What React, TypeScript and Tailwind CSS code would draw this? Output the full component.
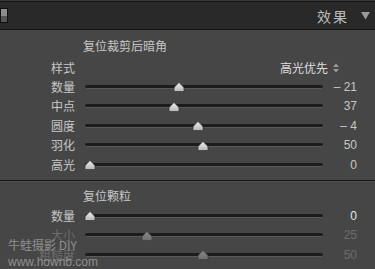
import React from "react";

const CJK = { fontFamily: '"Noto Sans CJK SC", "Noto Sans", sans-serif' };
const NUM = { fontFamily: '"Liberation Sans", Arial, sans-serif' };

function Thumb({ faded }: { faded?: boolean }) {
  return (
    <svg width="12" height="10" viewBox="0 0 12 10" className="block">
      <defs>
        <linearGradient id={faded ? "tgf" : "tg"} x1="0" y1="0" x2="0" y2="1">
          <stop offset="0" stopColor={faded ? "#8a8a8a" : "#f2f2f2"} />
          <stop offset="1" stopColor={faded ? "#6e6e6e" : "#b5b5b5"} />
        </linearGradient>
      </defs>
      <path
        d="M6 0.5 L10.5 5 Q11 6 11 7 L11 8.5 Q11 9.5 10 9.5 L2 9.5 Q1 9.5 1 8.5 L1 7 Q1 6 1.5 5 Z"
        fill={`url(#${faded ? "tgf" : "tg"})`}
        stroke={faded ? "#3a3a3a" : "#2a2a2a"}
        strokeWidth="0.6"
      />
    </svg>
  );
}

function Row({
  label,
  value,
  thumb,
  faded,
  valueBright,
}: {
  label: string;
  value: string;
  thumb: number;
  faded?: boolean;
  valueBright?: boolean;
}) {
  const text = faded ? "text-[#6c6c6c]" : "text-[#c6c6c6]";
  return (
    <div className="flex items-center h-[19.4px]">
      <div className={`w-[75px] text-right text-[12px] leading-none ${text}`} style={CJK}>
        {label}
      </div>
      <div className="ml-[10px] w-[238px] relative h-full flex items-center">
        <div className="w-full h-[4px] rounded-full bg-[#1c1c1c] border-b border-[#5a5a5a]" />
        <div className="absolute top-[5px]" style={{ left: thumb - 85 - 6 }}>
          <Thumb faded={faded} />
        </div>
      </div>
      <div
        className={`w-[34px] text-right text-[12px] leading-none ${
          faded ? "text-[#6c6c6c]" : valueBright ? "text-[#e6e6e6]" : "text-[#c6c6c6]"
        }`}
        style={NUM}
      >
        {value}
      </div>
    </div>
  );
}

export default function App() {
  return (
    <div className="w-[375px] h-[269px] overflow-hidden bg-[#464646] relative">
      <div className="h-[1px] bg-[#3a3a3a]" />
      <div className="h-[1px] bg-[#141414]" />
      <div className="h-[28px] bg-[#292929] border-b border-[#141414] flex items-center">
        <div className="w-[8px] h-[15px] border border-[#111] flex flex-col">
          <div className="flex-1 bg-[#8c8c8c]" />
          <div className="flex-1 bg-[#555]" />
        </div>
        <div className="flex-1" />
        <div className="text-[14px] leading-none text-[#bdbdbd] tracking-[2px]" style={CJK}>
          效果
        </div>
        <svg width="9" height="9" viewBox="0 0 9 9" className="ml-[12px] mr-[5px]">
          <path d="M0 1 L9 1 L4.5 8.5 Z" fill="#9a9a9a" />
        </svg>
      </div>

      <div className="pt-[8px]">
        <div className="ml-[83px] text-[12px] leading-[16px] text-[#c6c6c6]" style={CJK}>
          复位裁剪后暗角
        </div>
        <div className="mt-[4px] flex items-center h-[19.4px]">
          <div className="w-[75px] text-right text-[12px] leading-none text-[#c6c6c6]" style={CJK}>
            样式
          </div>
          <div className="flex-1" />
          <div className="text-[12px] leading-none text-[#dedede]" style={CJK}>
            高光优先
          </div>
          <svg width="6" height="10" viewBox="0 0 6 10" className="ml-[5px] mr-[36px]">
            <path d="M0 4 L3 0.5 L6 4 Z" fill="#9a9a9a" />
            <path d="M0 6 L3 9.5 L6 6 Z" fill="#9a9a9a" />
          </svg>
        </div>
        <Row label="数量" value="– 21" thumb={179} />
        <Row label="中点" value="37" thumb={174} />
        <Row label="圆度" value="– 4" thumb={198} />
        <Row label="羽化" value="50" thumb={203} />
        <Row label="高光" value="0" thumb={90} />

        <div className="mt-[6px] h-[1px] bg-[#161616]" />
        <div className="h-[1px] bg-[#4e4e4e]" />

        <div className="mt-[6px] ml-[83px] text-[12px] leading-[16px] text-[#c6c6c6]" style={CJK}>
          复位颗粒
        </div>
        <div className="mt-[2px]">
          <Row label="数量" value="0" thumb={90} valueBright />
          <Row label="大小" value="25" thumb={147} faded />
          <Row label="粗糙度" value="50" thumb={203} faded />
        </div>
      </div>

      <div className="absolute left-[8px] top-[238px] text-[12px] leading-[14px] text-white/40" style={CJK}>
        牛蛙摄影 DIY
      </div>
      <div className="absolute left-[8px] top-[255px] text-[12px] leading-[14px] text-white/40" style={NUM}>
        www.hownb.com
      </div>
    </div>
  );
}
